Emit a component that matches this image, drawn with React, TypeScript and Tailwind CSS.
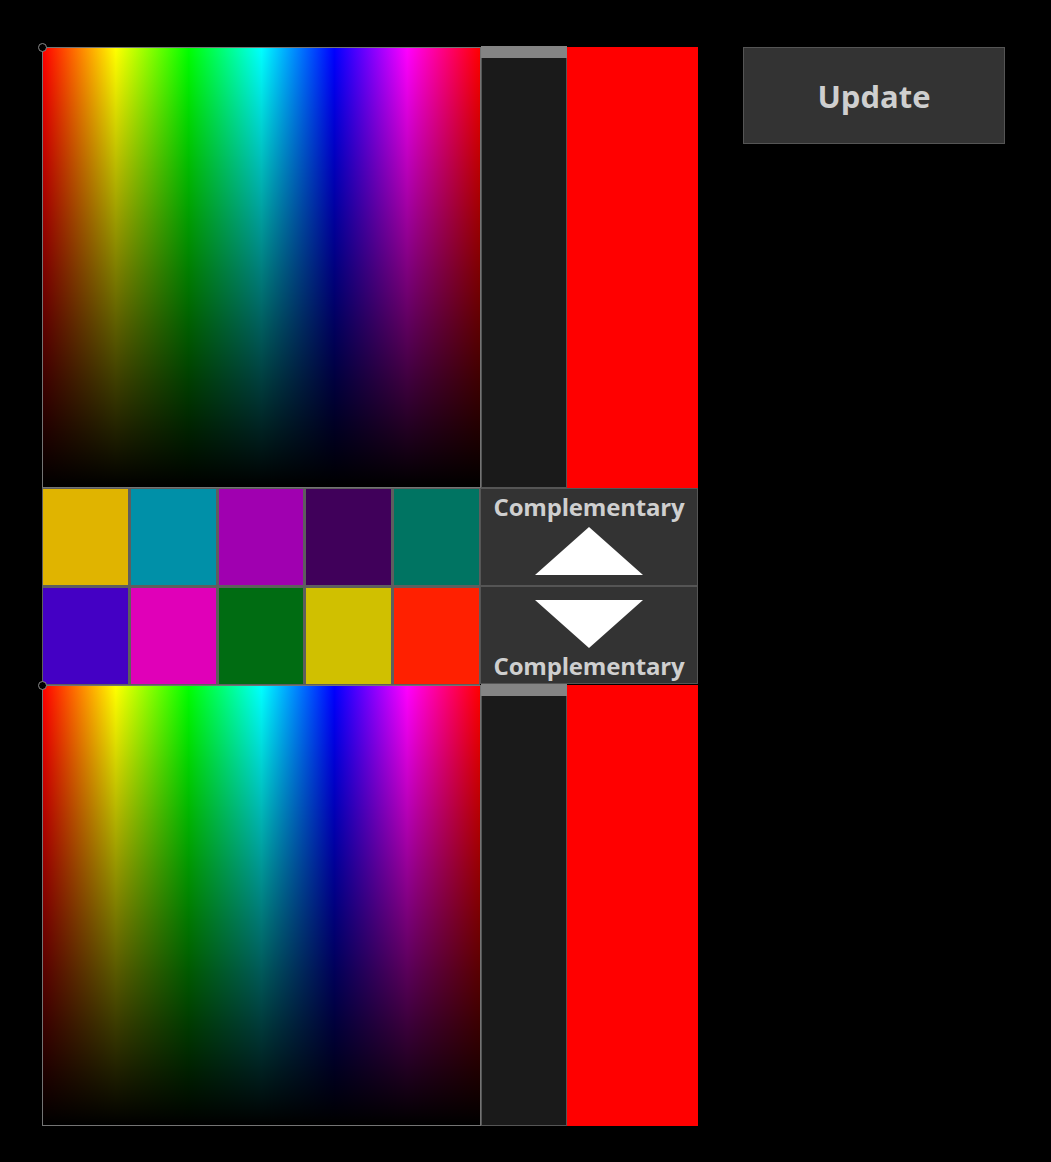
import { useState } from "react"

const topSwatches = ["#e0b400", "#0090a8", "#a000b0", "#40005a", "#007462"]
const bottomSwatches = ["#4400c4", "#e000b8", "#006c12", "#d0c000", "#ff2000"]

function HueField({ height }: { height: string }) {
  return (
    <div className={`relative w-[439px] ${height} border border-[#747474]`}>
      <div className="absolute inset-0 bg-[linear-gradient(to_right,#ff0000,#ffff00,#00ff00,#00ffff,#0000ff,#ff00ff,#ff0000)]" />
      <div className="absolute inset-0 bg-[linear-gradient(to_bottom,rgba(0,0,0,0),#000000)]" />
      {/* picker handle */}
      <div className="absolute -left-[5px] -top-[5px] h-[9px] w-[9px] rounded-full border-[1.5px] border-[#8a8a8a] bg-black" />
    </div>
  )
}

function ValueSlider({ height }: { height: string }) {
  return (
    <div className={`relative w-[86px] ${height} border border-[#555] bg-[#1a1a1a]`}>
      <div className="absolute -left-px -right-px -top-[2px] h-[12px] bg-[#848484]" />
    </div>
  )
}

function PickerRow({ height }: { height: string }) {
  return (
    <div className="flex">
      <HueField height={height} />
      <ValueSlider height={height} />
      <div className={`w-[131px] ${height} bg-[#ff0000]`} />
    </div>
  )
}

function Swatch({ color }: { color: string }) {
  return <button className="h-full w-full" style={{ backgroundColor: color }} />
}

function ArrowButton({ dir }: { dir: "up" | "down" }) {
  const label = (
    <span className="block text-[24px] font-bold leading-none tracking-[-0.2px] text-[#cfcfcf]">
      Complementary
    </span>
  )
  return (
    <button className="flex h-[98px] w-[218px] flex-col items-center border border-[#555] bg-[#333333]">
      {dir === "up" ? (
        <>
          <div className="pt-[6px]">{label}</div>
          <svg width="108" height="48" viewBox="0 0 108 48" className="mt-[8px]">
            <polygon points="54,0 108,48 0,48" fill="#ffffff" />
          </svg>
        </>
      ) : (
        <>
          <svg width="108" height="48" viewBox="0 0 108 48" className="mt-[13px]">
            <polygon points="0,0 108,0 54,48" fill="#ffffff" />
          </svg>
          <div className="pt-[6px]">{label}</div>
        </>
      )}
    </button>
  )
}

export default function App() {
  const [swatches] = useState([topSwatches, bottomSwatches])

  return (
    <div
      className="flex h-[1162px] w-[1051px] bg-black pl-[42px] pt-[47px]"
      style={{ fontFamily: '"Open Sans", "Noto Sans", sans-serif' }}
    >
      <div className="flex w-[656px] flex-col">
        <PickerRow height="h-[441px]" />

        {/* palette + complementary controls */}
        <div className="flex">
          <div className="grid h-[197px] w-[439px] grid-cols-5 grid-rows-2 gap-[3px] bg-[#5e5e5e] p-px">
            {swatches.flat().map((c, i) => (
              <Swatch key={i} color={c} />
            ))}
          </div>
          <div className="flex flex-col">
            <ArrowButton dir="up" />
            <ArrowButton dir="down" />
          </div>
        </div>

        <PickerRow height="h-[441px]" />
      </div>

      <div className="ml-[45px]">
        <button className="flex h-[97px] w-[262px] items-center justify-center border border-[#555] bg-[#333333] pt-[2px] text-[31px] font-bold text-[#cfcfcf]">
          Update
        </button>
      </div>
    </div>
  )
}
